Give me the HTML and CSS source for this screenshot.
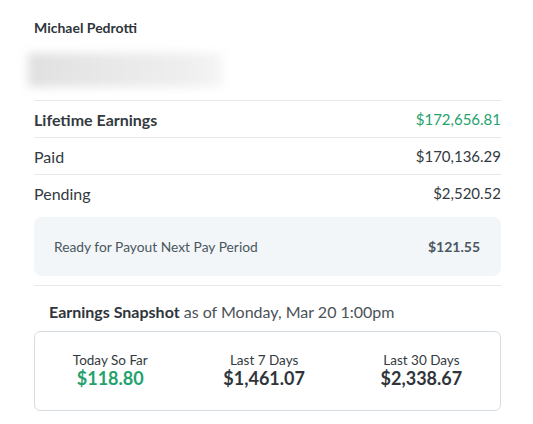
FILE: index.html
```html
<!DOCTYPE html>
<html lang="en">
<head>
    <meta charset="UTF-8">
    <title>Earnings</title>
    <link rel="stylesheet" href="styles.css">
</head>
<body>
    <div class="panel">
        <div class="name">Michael Pedrotti</div>
        <div class="blurred"></div>

        <div class="row total">
            <span>Lifetime Earnings</span>
            <span class="amount green">$172,656.81</span>
        </div>
        <div class="row">
            <span>Paid</span>
            <span class="amount">$170,136.29</span>
        </div>
        <div class="row last">
            <span>Pending</span>
            <span class="amount">$2,520.52</span>
        </div>

        <div class="payout">
            <span>Ready for Payout Next Pay Period</span>
            <strong>$121.55</strong>
        </div>

        <div class="snapshot">
            <h3><strong>Earnings Snapshot</strong> as of Monday, Mar 20 1:00pm</h3>
            <div class="snap-box">
                <div class="stat">
                    <div class="label">Today So Far</div>
                    <div class="value green">$118.80</div>
                </div>
                <div class="stat">
                    <div class="label">Last 7 Days</div>
                    <div class="value">$1,461.07</div>
                </div>
                <div class="stat">
                    <div class="label">Last 30 Days</div>
                    <div class="value">$2,338.67</div>
                </div>
            </div>
        </div>
    </div>
</body>
</html>
```

FILE: styles.css
```css
body {
    margin: 0;
    background: #fff;
    font-family: Lato, "Open Sans", sans-serif;
    color: #333a40;
}
.panel {
    width: 467px;
    padding: 19px 0 0 34px;
}
.name {
    font-size: 14px;
    font-weight: bold;
    line-height: 18px;
    color: #2f353b;
}
.blurred {
    margin: 16px 0 0 -6px;
    width: 194px;
    height: 34px;
    background: linear-gradient(90deg, #e0e0e0, #e8e8e8 40%, #eeeeee 80%, #f5f5f5);
    filter: blur(5px);
}
.row {
    display: flex;
    justify-content: space-between;
    align-items: center;
    height: 36px;
    border-top: 1px solid #e6e9eb;
    font-size: 16px;
    color: #333a40;
}
.blurred + .row {
    margin-top: 13px;
}
.row.total {
    font-weight: bold;
}
.row .amount {
    font-size: 15px;
    font-weight: normal;
}
.green {
    color: #23a26d;
}
.payout {
    display: flex;
    justify-content: space-between;
    align-items: center;
    margin-top: 6px;
    height: 59px;
    padding: 0 21px 0 20px;
    background: #f2f6f8;
    border-radius: 8px;
    font-size: 13.8px;
    color: #4b5660;
}
.payout strong {
    color: #4b5660;
    font-size: 14px;
}
.snapshot {
    margin-top: 9px;
    border-top: 1px solid #e6e9eb;
}
.snapshot h3 {
    margin: 0;
    padding: 16px 0 0 15px;
    font-size: 16px;
    font-weight: normal;
    line-height: 20px;
    color: #4b5258;
}
.snapshot h3 strong {
    color: #2f353b;
}
.snap-box {
    display: flex;
    justify-content: space-around;
    align-items: center;
    margin-top: 9px;
    height: 80px;
    border: 1px solid #d5dde2;
    border-radius: 6px;
    box-sizing: border-box;
}
.stat {
    text-align: center;
    margin-top: 0;
}
.label {
    font-size: 13.5px;
    line-height: 15px;
    color: #333a40;
}
.value {
    font-size: 18px;
    font-weight: bold;
    line-height: 21px;
    color: #2f353b;
}
.value.green {
    color: #23a26d;
}
```
